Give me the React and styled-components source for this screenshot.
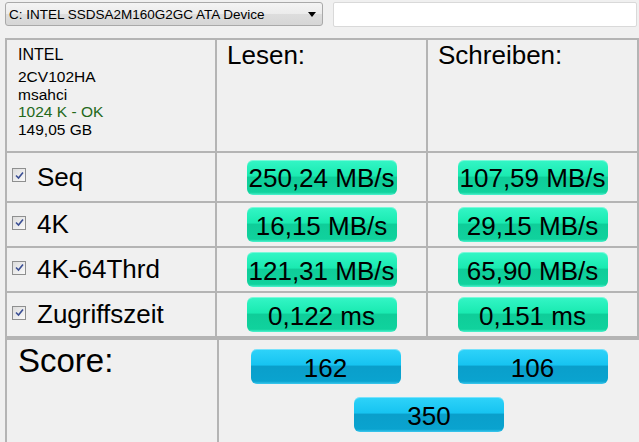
import React from "react";
import styled, { createGlobalStyle } from "styled-components";

const GlobalStyle = createGlobalStyle`
  html, body {
    margin: 0;
    padding: 0;
    background: #f0f0f0;
    font-family: "Liberation Sans", Arial, sans-serif;
    overflow: hidden;
  }
`;

const Page = styled.div`
  width: 639px;
  height: 442px;
  background: #f0f0f0;
  color: #000;
  overflow: hidden;
`;

const TopBar = styled.div`
  display: flex;
  align-items: flex-start;
  gap: 10px;
  padding: 2px 2px 0 5px;
  height: 38px;
  box-sizing: border-box;
`;

const Select = styled.div`
  width: 318px;
  height: 24px;
  box-sizing: border-box;
  border: 1px solid #a9a9a9;
  border-radius: 3px;
  background: linear-gradient(to bottom, #f4f4f4 0%, #ebebeb 50%, #dddddd 51%, #d6d6d6 100%);
  display: flex;
  align-items: center;
  justify-content: space-between;
  padding: 0 5px 0 3px;
  font-size: 13.5px;
`;

const Arrow = styled.span`
  width: 0;
  height: 0;
  border-left: 4px solid transparent;
  border-right: 4px solid transparent;
  border-top: 5px solid #000;
  margin-right: 1px;
`;

const TextInput = styled.div`
  flex: 1;
  height: 25px;
  box-sizing: border-box;
  background: #fff;
  border: 1px solid #d9d9d9;
  border-radius: 2px;
`;

const Table = styled.div`
  display: grid;
  grid-template-columns: 210px 211px 211px;
  grid-template-rows: 113px 50px 45px 45px 45px;
  margin-left: 5px;
  border-top: 2px solid #b4b4b4;
  border-left: 2px solid #b4b4b4;
`;

const Cell = styled.div`
  border-right: 2px solid #b4b4b4;
  border-bottom: 2px solid #b4b4b4;
  display: flex;
  align-items: center;
  justify-content: ${({ $center }) => ($center ? "center" : "flex-start")};
  min-width: 0;
`;

const InfoCell = styled(Cell)`
  flex-direction: column;
  align-items: flex-start;
  justify-content: flex-start;
  padding: 6px 0 0 11px;
  font-size: 15.5px;
  line-height: 17.5px;
`;

const Brand = styled.div`
  font-size: 16px;
  line-height: 18px;
  margin-bottom: 4px;
`;

const InfoLine = styled.div`
  color: ${({ $ok }) => ($ok ? "#23691a" : "#000")};
`;

const HeadCell = styled(Cell)`
  align-items: flex-start;
  padding: 0 0 0 10px;
  font-size: 26px;
`;

const Label = styled(Cell)`
  gap: 11px;
  padding-left: 5px;
  font-size: 26px;
`;

const Check = styled.span`
  width: 14px;
  height: 14px;
  box-sizing: border-box;
  border: 1px solid #8e8f8f;
  background: linear-gradient(135deg, #dcdcdc, #fafafa);
  display: flex;
  align-items: center;
  justify-content: center;
  margin-top: -4px;
`;

const Pill = styled.div`
  width: 150px;
  height: 35px;
  box-sizing: border-box;
  border-radius: 6px;
  display: flex;
  align-items: center;
  justify-content: center;
  font-size: 26px;
  white-space: nowrap;
  padding-top: 3px;
  background: ${({ $blue }) =>
    $blue
      ? "linear-gradient(to bottom, #2fd3f9 0%, #17c4f1 45%, #0a9fcb 50%, #0aa3cf 92%, #3cc9ef 100%)"
      : "linear-gradient(to bottom, #34f6c6 0%, #1aeab1 45%, #0fcd99 50%, #10d29d 92%, #4ff3cf 100%)"};
  box-shadow: inset 0 1px 0 rgba(255, 255, 255, 0.35);
`;

const ScoreBox = styled.div`
  display: grid;
  grid-template-columns: 212px 1fr;
  margin-left: 5px;
  height: 104px;
  border-top: 2px solid #b4b4b4;
  border-left: 2px solid #b4b4b4;
`;

const ScoreLabel = styled.div`
  border-right: 2px solid #b4b4b4;
  font-size: 33px;
  padding: 2px 0 0 11px;
`;

const ScoreArea = styled.div`
  display: flex;
  flex-direction: column;
  align-items: center;
  gap: 13px;
  padding-top: 9px;
`;

const ScoreRow = styled.div`
  display: flex;
  gap: 57px;
`;

const CheckMark = () => (
  <svg width="9" height="9" viewBox="0 0 9 9">
    <path d="M1 4.5 L3.5 7 L8 1.5" fill="none" stroke="#3b4f94" strokeWidth="1.6" />
  </svg>
);

const rows = [
  { name: "Seq", read: "250,24 MB/s", write: "107,59 MB/s" },
  { name: "4K", read: "16,15 MB/s", write: "29,15 MB/s" },
  { name: "4K-64Thrd", read: "121,31 MB/s", write: "65,90 MB/s" },
  { name: "Zugriffszeit", read: "0,122 ms", write: "0,151 ms" },
];

export default function App() {
  return (
    <Page>
      <GlobalStyle />
      <TopBar>
        <Select>
          <span>C: INTEL SSDSA2M160G2GC ATA Device</span>
          <Arrow />
        </Select>
        <TextInput />
      </TopBar>

      <Table>
        <InfoCell>
          <Brand>INTEL</Brand>
          <InfoLine>2CV102HA</InfoLine>
          <InfoLine>msahci</InfoLine>
          <InfoLine $ok>1024 K - OK</InfoLine>
          <InfoLine>149,05 GB</InfoLine>
        </InfoCell>
        <HeadCell>Lesen:</HeadCell>
        <HeadCell>Schreiben:</HeadCell>

        {rows.map((r) => (
          <React.Fragment key={r.name}>
            <Label>
              <Check>
                <CheckMark />
              </Check>
              {r.name}
            </Label>
            <Cell $center>
              <Pill>{r.read}</Pill>
            </Cell>
            <Cell $center>
              <Pill>{r.write}</Pill>
            </Cell>
          </React.Fragment>
        ))}
      </Table>

      <ScoreBox>
        <ScoreLabel>Score:</ScoreLabel>
        <ScoreArea>
          <ScoreRow>
            <Pill $blue>162</Pill>
            <Pill $blue>106</Pill>
          </ScoreRow>
          <Pill $blue>350</Pill>
        </ScoreArea>
      </ScoreBox>
    </Page>
  );
}
